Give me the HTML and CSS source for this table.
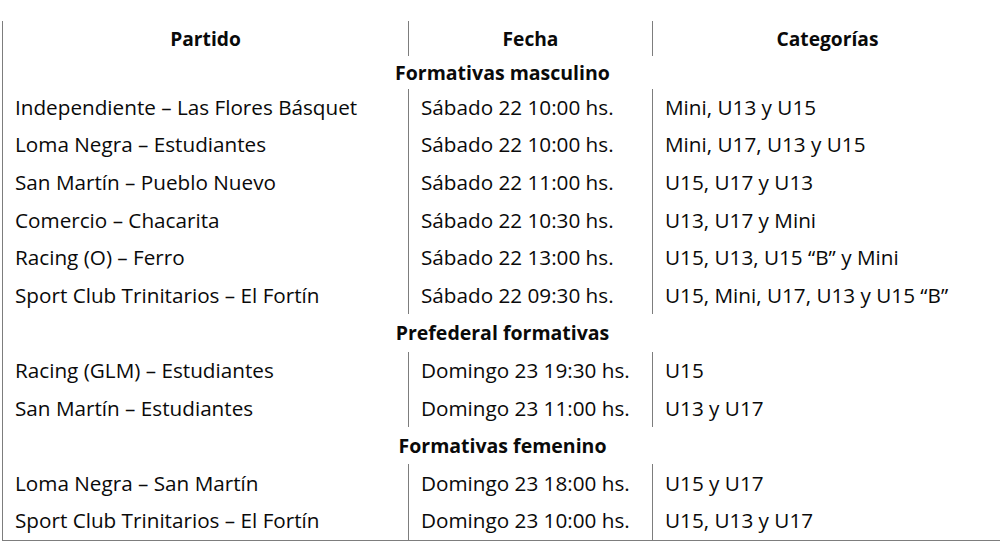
FILE: index.html
```html
<!DOCTYPE html>
<html lang="es">
<head>
<meta charset="utf-8">
<link rel="stylesheet" href="styles.css">
</head>
<body>
<div class="table">
  <div class="cell head">Partido</div>
  <div class="cell head div">Fecha</div>
  <div class="cell head div">Categorías</div>

  <div class="section">Formativas masculino</div>

  <div class="cell">Independiente – Las Flores Básquet</div>
  <div class="cell div">Sábado 22 10:00 hs.</div>
  <div class="cell div">Mini, U13 y U15</div>

  <div class="cell">Loma Negra – Estudiantes</div>
  <div class="cell div">Sábado 22 10:00 hs.</div>
  <div class="cell div">Mini, U17, U13 y U15</div>

  <div class="cell">San Martín – Pueblo Nuevo</div>
  <div class="cell div">Sábado 22 11:00 hs.</div>
  <div class="cell div">U15, U17 y U13</div>

  <div class="cell">Comercio – Chacarita</div>
  <div class="cell div">Sábado 22 10:30 hs.</div>
  <div class="cell div">U13, U17 y Mini</div>

  <div class="cell">Racing (O) – Ferro</div>
  <div class="cell div">Sábado 22 13:00 hs.</div>
  <div class="cell div">U15, U13, U15 “B” y Mini</div>

  <div class="cell">Sport Club Trinitarios – El Fortín</div>
  <div class="cell div">Sábado 22 09:30 hs.</div>
  <div class="cell div">U15, Mini, U17, U13 y U15 “B”</div>

  <div class="section">Prefederal formativas</div>

  <div class="cell">Racing (GLM) – Estudiantes</div>
  <div class="cell div">Domingo 23 19:30 hs.</div>
  <div class="cell div">U15</div>

  <div class="cell">San Martín – Estudiantes</div>
  <div class="cell div">Domingo 23 11:00 hs.</div>
  <div class="cell div">U13 y U17</div>

  <div class="section">Formativas femenino</div>

  <div class="cell">Loma Negra – San Martín</div>
  <div class="cell div">Domingo 23 18:00 hs.</div>
  <div class="cell div">U15 y U17</div>

  <div class="cell">Sport Club Trinitarios – El Fortín</div>
  <div class="cell div">Domingo 23 10:00 hs.</div>
  <div class="cell div">U15, U13 y U17</div>
</div>
</body>
</html>
```

FILE: styles.css
```css
html, body {
  margin: 0;
  padding: 0;
  background: #fff;
  overflow: hidden;
}
body {
  font-family: "Open Sans", Lato, sans-serif;
  font-size: 20.7px;
  color: #0a0a0a;
}
.table {
  display: grid;
  grid-template-columns: 405px 244px 350px;
  grid-auto-rows: 37.6px;
  grid-template-rows: 35px 32.5px;
  margin: 21px 0 0 2px;
  width: 999px;
  border-left: 1px solid #7d7d7d;
  border-bottom: 1px solid #7d7d7d;
}
.cell {
  display: flex;
  align-items: center;
  padding: 0 0 1px 12px;
  white-space: nowrap;
}
.cell.div {
  border-left: 1px solid #7d7d7d;
}
.cell.head {
  justify-content: center;
  padding: 0;
  font-size: 19.2px;
  font-weight: 700;
}
.section {
  grid-column: 1 / -1;
  display: flex;
  align-items: center;
  justify-content: center;
  font-size: 19.5px;
  font-weight: 700;
  white-space: nowrap;
}
```
